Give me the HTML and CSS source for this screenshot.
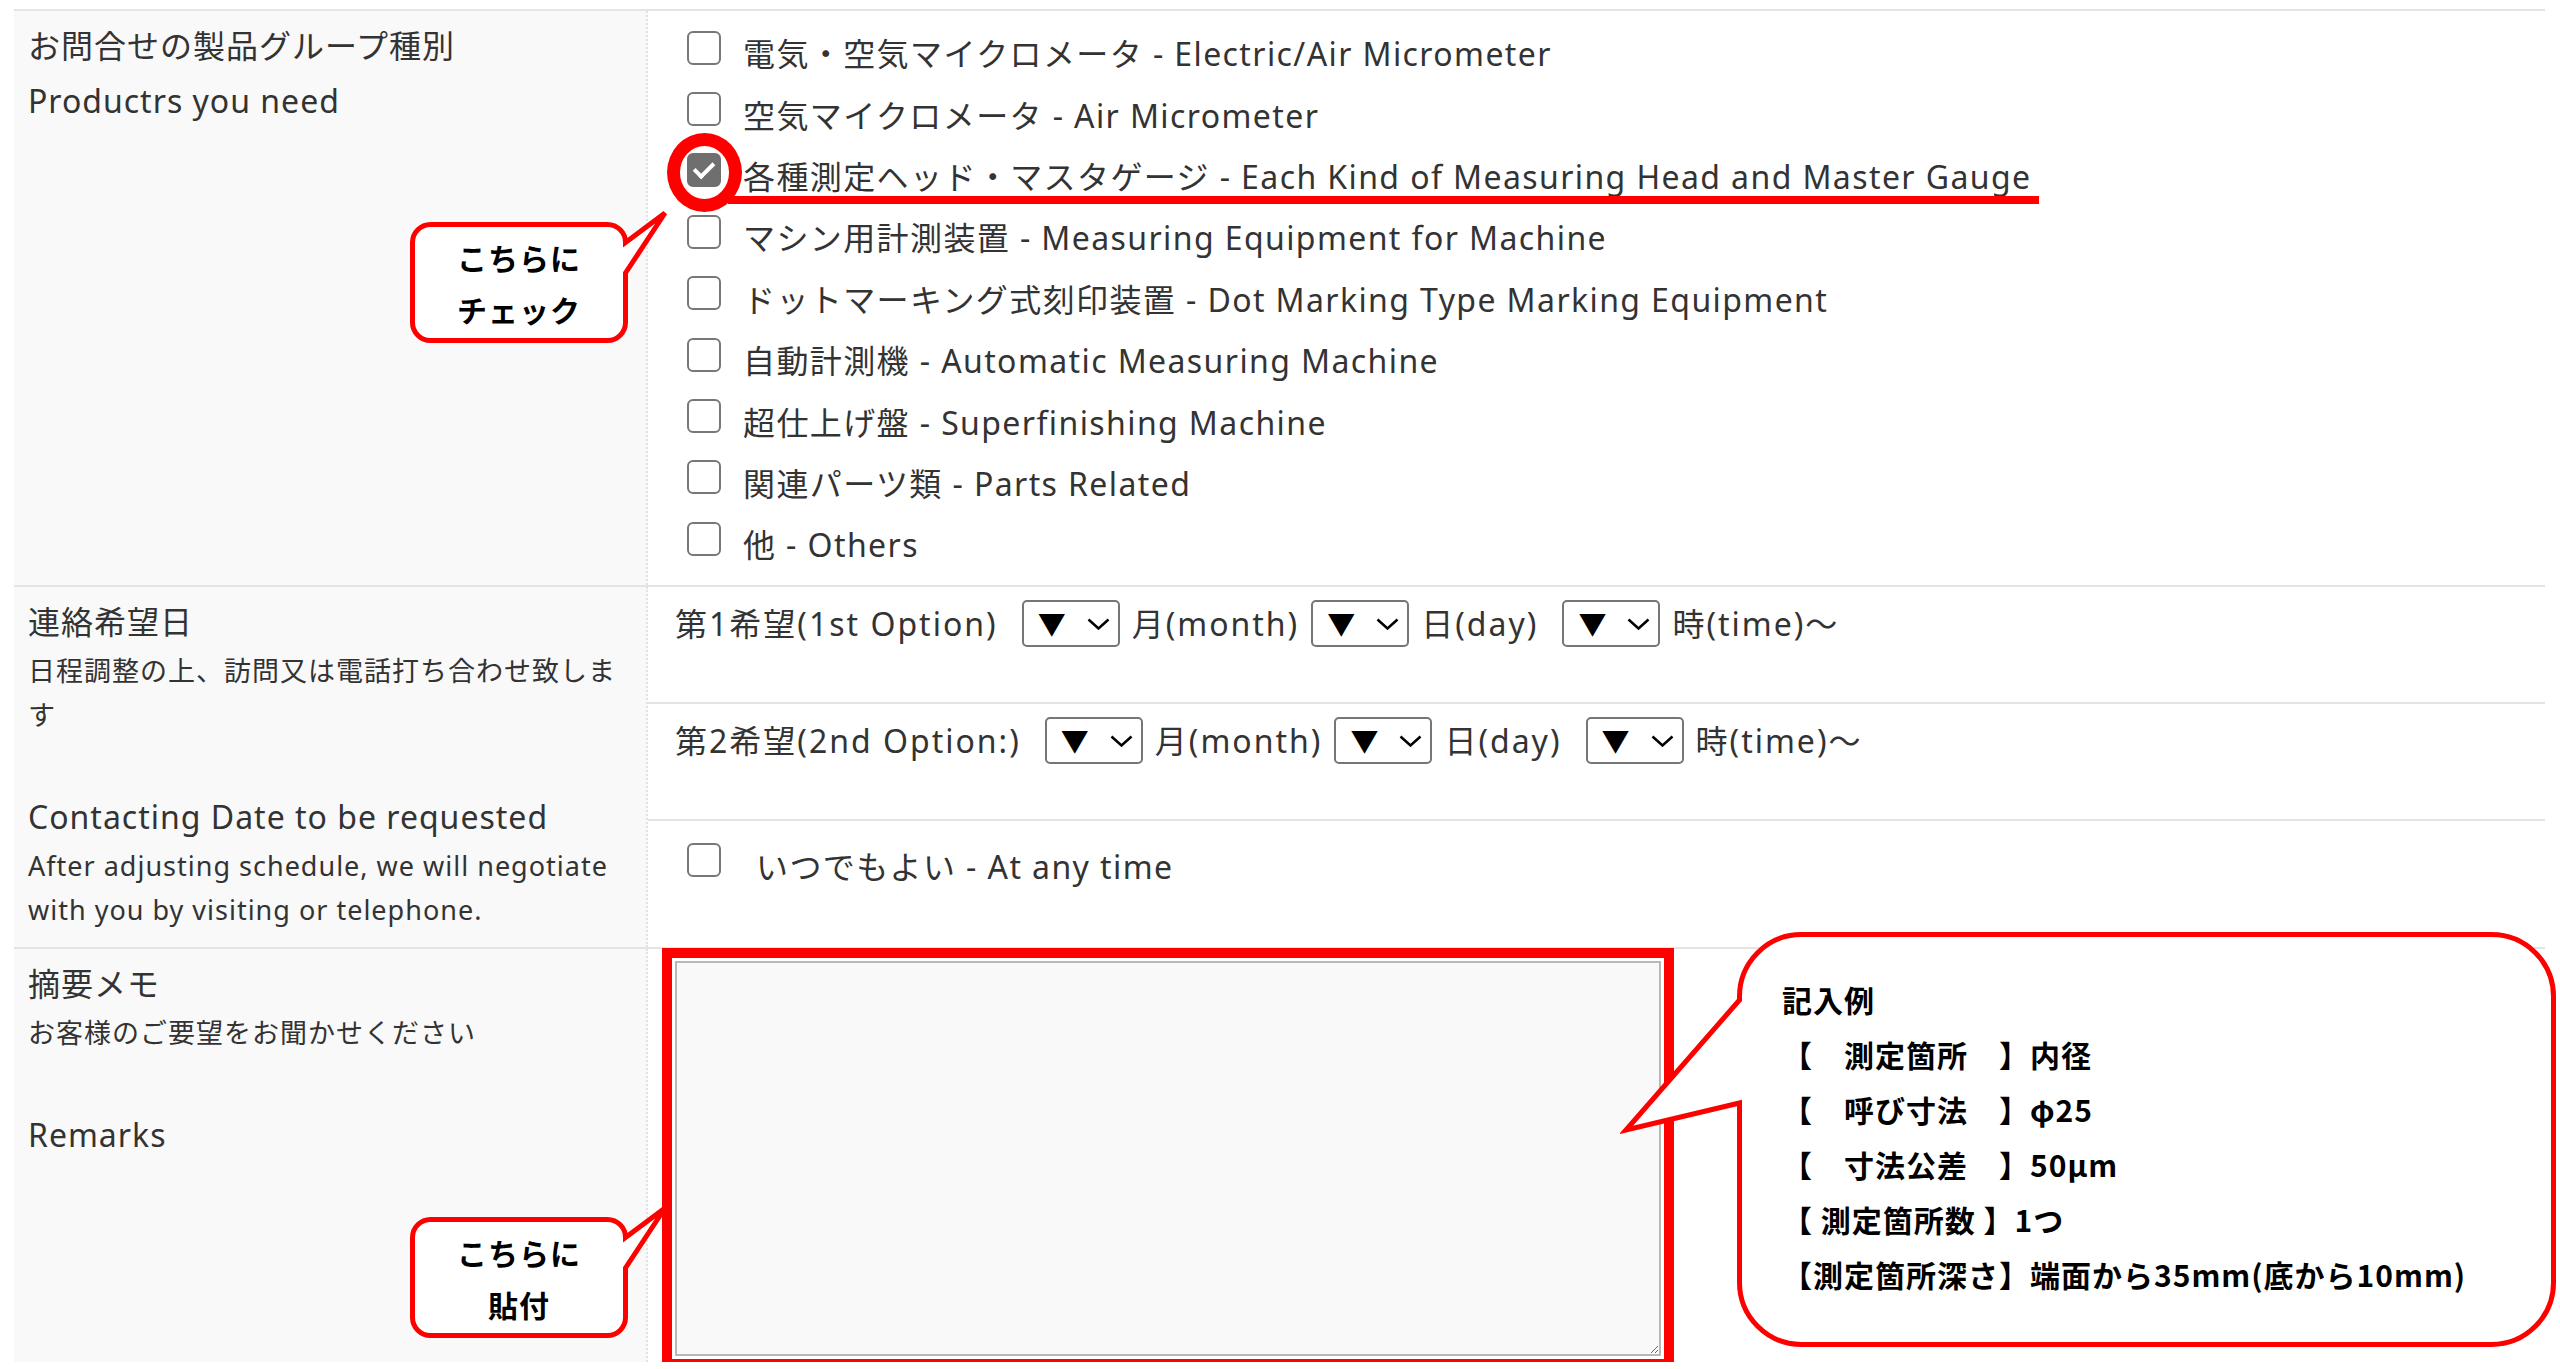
FILE: index.html
```html
<!DOCTYPE html>
<html lang="ja">
<head>
    <meta charset="UTF-8">
    <meta name="viewport" content="width=device-width, initial-scale=1.0">
    <title>お問合せフォーム</title>
    <link rel="stylesheet" href="styles.css">
</head>
<body>

<div class="form">

    <!-- 製品グループ -->
    <div class="row">
        <div class="label">
            <p class="head">お問合せの製品グループ種別</p>
            <p class="head">Productrs you need</p>
        </div>
        <div class="value checks">
            <label class="check-row"><input type="checkbox"><span>電気・空気マイクロメータ - Electric/Air Micrometer</span></label>
            <label class="check-row"><input type="checkbox"><span>空気マイクロメータ - Air Micrometer</span></label>
            <label class="check-row"><input type="checkbox" checked><span>各種測定ヘッド・マスタゲージ - Each Kind of Measuring Head and Master Gauge</span></label>
            <label class="check-row"><input type="checkbox"><span>マシン用計測装置 - Measuring Equipment for Machine</span></label>
            <label class="check-row"><input type="checkbox"><span>ドットマーキング式刻印装置 - Dot Marking Type Marking Equipment</span></label>
            <label class="check-row"><input type="checkbox"><span>自動計測機 - Automatic Measuring Machine</span></label>
            <label class="check-row"><input type="checkbox"><span>超仕上げ盤 - Superfinishing Machine</span></label>
            <label class="check-row"><input type="checkbox"><span>関連パーツ類 - Parts Related</span></label>
            <label class="check-row"><input type="checkbox"><span>他 - Others</span></label>
        </div>
    </div>

    <!-- 連絡希望日 -->
    <div class="row">
        <div class="label">
            <p class="head">連絡希望日</p>
            <p class="note">日程調整の上、訪問又は電話打ち合わせ致します</p>
            <p class="head en">Contacting Date to be requested</p>
            <p class="note">After adjusting schedule, we will negotiate with you by visiting or telephone.</p>
        </div>
        <div class="value">
            <div class="date-row">
                <span class="wide">第1希望(1st Option)</span>
                <span class="pick"><select><option>▼</option></select><svg viewBox="0 0 23 12"><path d="M1.5 1.5 L11.5 10.5 L21.5 1.5"/></svg></span>
                <span>月(month)</span>
                <span class="pick"><select><option>▼</option></select><svg viewBox="0 0 23 12"><path d="M1.5 1.5 L11.5 10.5 L21.5 1.5"/></svg></span>
                <span class="wide">日(day)</span>
                <span class="pick"><select><option>▼</option></select><svg viewBox="0 0 23 12"><path d="M1.5 1.5 L11.5 10.5 L21.5 1.5"/></svg></span>
                <span>時(time)～</span>
            </div>
            <div class="date-row">
                <span class="wide">第2希望(2nd Option:)</span>
                <span class="pick"><select><option>▼</option></select><svg viewBox="0 0 23 12"><path d="M1.5 1.5 L11.5 10.5 L21.5 1.5"/></svg></span>
                <span>月(month)</span>
                <span class="pick"><select><option>▼</option></select><svg viewBox="0 0 23 12"><path d="M1.5 1.5 L11.5 10.5 L21.5 1.5"/></svg></span>
                <span class="wide">日(day)</span>
                <span class="pick"><select><option>▼</option></select><svg viewBox="0 0 23 12"><path d="M1.5 1.5 L11.5 10.5 L21.5 1.5"/></svg></span>
                <span>時(time)～</span>
            </div>
            <div class="date-row any">
                <label class="check-row loose"><input type="checkbox"><span>いつでもよい - At any time</span></label>
            </div>
        </div>
    </div>

    <!-- 摘要メモ -->
    <div class="row">
        <div class="label">
            <p class="head">摘要メモ</p>
            <p class="note">お客様のご要望をお聞かせください</p>
            <p class="head en">Remarks</p>
        </div>
        <div class="value memo">
            <textarea></textarea>
        </div>
    </div>

</div>

<!-- 注釈 -->
<div class="mark-circle"></div>
<div class="mark-line"></div>

<div class="callout callout-check">
    <svg class="callout-shape" viewBox="0 0 270 145"><path d="M25.5 19.5 H202.5 A18 18 0 0 1 220.5 37.5 L260 8 L220.5 68 V117.5 A18 18 0 0 1 202.5 135.5 H25.5 A18 18 0 0 1 7.5 117.5 V37.5 A18 18 0 0 1 25.5 19.5 Z"/></svg>
    <div class="callout-text"><span>こちらに</span><span>チェック</span></div>
</div>

<div class="callout callout-paste">
    <svg class="callout-shape" viewBox="0 0 270 145"><path d="M25.5 19.5 H202.5 A18 18 0 0 1 220.5 37.5 L260 8 L220.5 68 V117.5 A18 18 0 0 1 202.5 135.5 H25.5 A18 18 0 0 1 7.5 117.5 V37.5 A18 18 0 0 1 25.5 19.5 Z"/></svg>
    <div class="callout-text"><span>こちらに</span><span>貼付</span></div>
</div>

<div class="example">
    <svg class="callout-shape" viewBox="0 0 940 430"><path d="M181.5 9.5 H871.5 A62 62 0 0 1 933.5 71.5 V357.5 A62 62 0 0 1 871.5 419.5 H181.5 A62 62 0 0 1 119.5 357.5 V178 L6 205 L119.5 75 V71.5 A62 62 0 0 1 181.5 9.5 Z"/></svg>
    <div class="example-text">
        <p>記入例</p>
        <p>【　測定箇所　】内径</p>
        <p>【　呼び寸法　】φ25</p>
        <p>【　寸法公差　】50μm</p>
        <p>【 測定箇所数 】1つ</p>
        <p>【測定箇所深さ】端面から35mm(底から10mm)</p>
    </div>
</div>

</body>
</html>
```

FILE: styles.css
```css
body {
    margin: 0;
    position: relative;
    font-family: "Noto Sans", "Noto Sans CJK JP", sans-serif;
    color: #333;
    background: #fff;
    letter-spacing: 1px;
}
p {
    margin: 0;
}

/* form table */
.form {
    margin: 9px 15px 0 14px;
}
.row {
    display: grid;
    grid-template-columns: 634px 1fr;
    border-top: 2px solid #e4e4e4;
}
.label {
    background: #f9f9f9;
    padding: 7px 14px 14px;
    border-right: 2px dotted #e2e2e2;
}
.head {
    font-size: 32px;
    line-height: 55px;
}
.head.en {
    margin-top: 52px;
}
.note {
    font-size: 27px;
    line-height: 44px;
}

/* checkboxes */
.checks {
    padding: 12px 0 9px 27px;
}
.check-row {
    display: flex;
    align-items: center;
    height: 61.4px;
    font-size: 32px;
    line-height: 55px;
    letter-spacing: 1.4px;
}
.check-row input {
    appearance: none;
    flex-shrink: 0;
    display: grid;
    place-content: center;
    width: 34px;
    height: 34px;
    margin: 0 22px 12px 12px;
    border: 2.5px solid #777;
    border-radius: 6px;
    background: #fff;
}
.check-row input:checked {
    background: #6f6f6f;
    border-color: #6f6f6f;
}
.check-row input:checked::before {
    content: "";
    width: 8px;
    height: 16px;
    margin-top: -4px;
    border: solid #fff;
    border-width: 0 4px 4px 0;
    transform: rotate(45deg);
}
.check-row.loose input {
    margin-right: 35px;
}

/* date selects */
.date-row {
    display: flex;
    align-items: center;
    gap: 12px;
    padding: 9px 0 51px 27px;
    font-size: 32px;
    line-height: 55px;
    letter-spacing: 2px;
    border-bottom: 2px solid #e4e4e4;
}
.date-row.any {
    padding: 15px 0 50px 27px;
    border-bottom: none;
}
.date-row .wide {
    margin-right: 12px;
}
.pick {
    position: relative;
    display: inline-flex;
}
.pick select {
    appearance: none;
    width: 98px;
    height: 47px;
    padding: 0 0 0 14px;
    border: 2px solid #767676;
    border-radius: 5px;
    background: #fff;
    color: #000;
    font-family: "Noto Sans CJK JP", sans-serif;
    font-size: 28px;
}
.pick svg {
    position: absolute;
    right: 10px;
    top: 18px;
    width: 23px;
    height: 12px;
    fill: none;
    stroke: #000;
    stroke-width: 2.5;
    pointer-events: none;
}

/* memo */
.memo {
    padding: 11.6px 0 6px 27px;
}
.memo textarea {
    display: block;
    box-sizing: border-box;
    width: 986px;
    height: 395px;
    border: 2px solid #b8b8b8;
    background: #f9f9f9;
    outline: 10px solid #f00;
    outline-offset: 3px;
}

/* annotations */
.mark-circle {
    position: absolute;
    left: 667px;
    top: 133px;
    width: 75px;
    height: 79px;
    box-sizing: border-box;
    border: 13px solid #f00;
    border-radius: 50%;
}
.mark-line {
    position: absolute;
    left: 728px;
    top: 196px;
    width: 1311px;
    height: 8px;
    background: #f00;
}
.callout {
    position: absolute;
    left: 405px;
    width: 270px;
    height: 145px;
}
.callout-check {
    top: 205px;
}
.callout-paste {
    top: 1200px;
}
.callout-shape {
    display: block;
    width: 100%;
    height: 100%;
    fill: #fff;
    stroke: #f00;
    stroke-width: 5;
}
.callout-text {
    position: absolute;
    left: 5px;
    top: 17px;
    width: 218px;
    height: 121px;
    display: flex;
    flex-direction: column;
    justify-content: center;
    align-items: center;
    font-family: "Noto Sans CJK JP", sans-serif;
    font-weight: 700;
    font-size: 30px;
    line-height: 52px;
    color: #000;
}
.example {
    position: absolute;
    left: 1620px;
    top: 925px;
    width: 940px;
    height: 430px;
}
.example-text {
    position: absolute;
    left: 162px;
    top: 47px;
    font-family: "Noto Sans CJK JP", sans-serif;
    font-weight: 700;
    font-size: 30px;
    line-height: 55px;
    color: #000;
}
.example-text p {
    white-space: pre;
}
```
